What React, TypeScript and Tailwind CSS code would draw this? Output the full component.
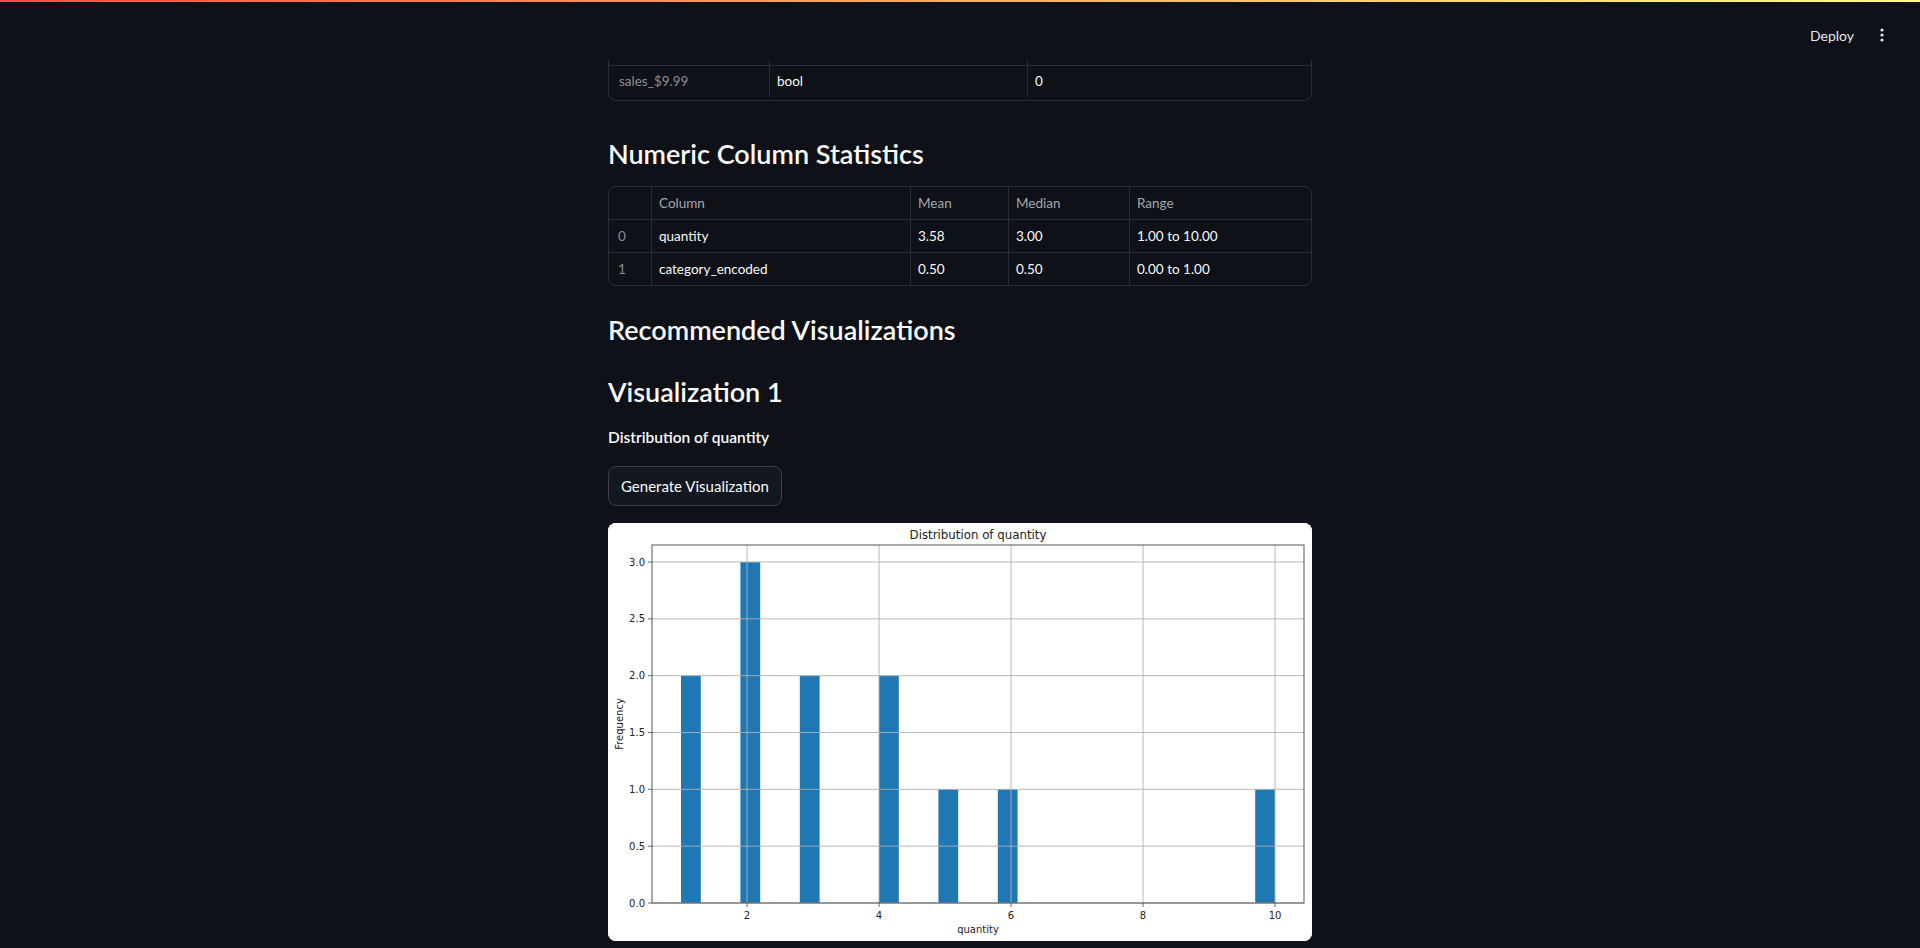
import React from "react";

const bins = [
  { from: 1.0, count: 2 },
  { from: 1.9, count: 3 },
  { from: 2.8, count: 2 },
  { from: 4.0, count: 2 },
  { from: 4.9, count: 1 },
  { from: 5.8, count: 1 },
  { from: 9.7, count: 1 },
];

const sx = (v: number) => 139 + (v - 2) * 66;
const sy = (v: number) => 380 - v * 113.67;

const HistChart = () => {
  const xTicks = [2, 4, 6, 8, 10];
  const yTicks = [0, 0.5, 1, 1.5, 2, 2.5, 3];
  return (
    <svg width="704" height="418" viewBox="0 0 704 418" className="block">
      <rect x="0" y="0" width="704" height="418" fill="#ffffff" />
      {bins.map((b, i) => (
        <rect
          key={i}
          x={sx(b.from)}
          y={sy(b.count)}
          width={0.3 * 66}
          height={380 - sy(b.count)}
          fill="#1f77b4"
        />
      ))}
      {xTicks.map((t) => (
        <line key={"gx" + t} x1={sx(t)} x2={sx(t)} y1="22" y2="380" stroke="#b0b0b0" strokeWidth="0.9" />
      ))}
      {yTicks.map((t) => (
        <line key={"gy" + t} x1="44" x2="696" y1={sy(t)} y2={sy(t)} stroke="#b0b0b0" strokeWidth="0.9" />
      ))}
      <rect x="44" y="22" width="652" height="358" fill="none" stroke="#555" strokeWidth="1" />
      {xTicks.map((t) => (
        <g key={"tx" + t}>
          <line x1={sx(t)} x2={sx(t)} y1="380" y2="384" stroke="#444" strokeWidth="0.8" />
          <text x={sx(t)} y="396" textAnchor="middle" fontSize="10" fill="#222" fontFamily="DejaVu Sans, sans-serif">
            {t}
          </text>
        </g>
      ))}
      {yTicks.map((t) => (
        <g key={"ty" + t}>
          <line x1="40" x2="44" y1={sy(t)} y2={sy(t)} stroke="#444" strokeWidth="0.8" />
          <text x="37" y={sy(t) + 3.6} textAnchor="end" fontSize="10" fill="#222" fontFamily="DejaVu Sans, sans-serif">
            {t.toFixed(1)}
          </text>
        </g>
      ))}
      <text x="370" y="16" textAnchor="middle" fontSize="11.8" fill="#222" fontFamily="DejaVu Sans, sans-serif">
        Distribution of quantity
      </text>
      <text x="370" y="410" textAnchor="middle" fontSize="10" fill="#222" fontFamily="DejaVu Sans, sans-serif">
        quantity
      </text>
      <text
        x="15"
        y="201"
        textAnchor="middle"
        fontSize="10"
        fill="#222"
        fontFamily="DejaVu Sans, sans-serif"
        transform="rotate(-90 15 201)"
      >
        Frequency
      </text>
    </svg>
  );
};

const statsRows = [
  { idx: "0", col: "quantity", mean: "3.58", median: "3.00", range: "1.00 to 10.00" },
  { idx: "1", col: "category_encoded", mean: "0.50", median: "0.50", range: "0.00 to 1.00" },
];

const StatsTable = () => (
  <div className="mt-[15px] border border-[#2a2d35] rounded-lg overflow-hidden text-[13.5px]">
    <div className="grid grid-cols-[42px_259px_98px_121px_1fr] h-[32px] text-[#a3a6ae]">
      <div />
      <div className="border-l border-[#2a2d35] px-[7px] flex items-center">Column</div>
      <div className="border-l border-[#2a2d35] px-[7px] flex items-center">Mean</div>
      <div className="border-l border-[#2a2d35] px-[7px] flex items-center">Median</div>
      <div className="border-l border-[#2a2d35] px-[7px] flex items-center">Range</div>
    </div>
    {statsRows.map((r) => (
      <div
        key={r.idx}
        className="grid grid-cols-[42px_259px_98px_121px_1fr] h-[33px] border-t border-[#2a2d35]"
      >
        <div className="px-[9px] flex items-center text-[#8b8e96]">{r.idx}</div>
        <div className="border-l border-[#2a2d35] px-[7px] flex items-center">{r.col}</div>
        <div className="border-l border-[#2a2d35] px-[7px] flex items-center">{r.mean}</div>
        <div className="border-l border-[#2a2d35] px-[7px] flex items-center">{r.median}</div>
        <div className="border-l border-[#2a2d35] px-[7px] flex items-center">{r.range}</div>
      </div>
    ))}
  </div>
);

const App = () => {
  return (
    <div className="min-h-screen bg-[#0e1117] text-[#fafafa] font-[Lato,sans-serif]">
      <div className="h-[2px] bg-gradient-to-r from-[#ff4b4b] to-[#fffd80]" />
      <header className="h-[58px] pt-2 flex items-center justify-end pr-[30px] gap-5">
        <button className="text-[14px] text-[#e6e6e6]">Deploy</button>
        <svg width="16" height="16" viewBox="0 0 16 16" fill="#e6e6e6">
          <circle cx="8" cy="3" r="1.6" />
          <circle cx="8" cy="8" r="1.6" />
          <circle cx="8" cy="13" r="1.6" />
        </svg>
      </header>

      <main className="w-[704px] mx-auto pb-2">
        <div className="border-x border-b border-[#2a2d35] rounded-b-lg text-[13.5px]">
          <div className="grid grid-cols-[160px_258px_1fr] h-[5px]">
            <div />
            <div className="border-l border-[#2a2d35]" />
            <div className="border-l border-[#2a2d35]" />
          </div>
          <div className="grid grid-cols-[160px_258px_1fr] h-[35px] border-t border-[#2a2d35] pb-[3px]">
            <div className="px-[10px] flex items-center text-[#8b8e96]">sales_$9.99</div>
            <div className="border-l border-[#2a2d35] px-[7px] flex items-center">bool</div>
            <div className="border-l border-[#2a2d35] px-[7px] flex items-center">0</div>
          </div>
        </div>

        <h3 className="mt-[36px] text-[27px] leading-[34px] font-semibold">Numeric Column Statistics</h3>
        <StatsTable />

        <h3 className="mt-[27px] text-[27px] leading-[34px] font-semibold">Recommended Visualizations</h3>
        <h3 className="mt-[28px] text-[27px] leading-[34px] font-semibold">Visualization 1</h3>
        <p className="mt-[16px] text-[15.5px] leading-6 font-semibold">Distribution of quantity</p>

        <button className="mt-[17px] h-[40px] px-[12px] rounded-lg border border-[#3b3e46] bg-[#131720] text-[15px] text-[#fafafa]">
          Generate Visualization
        </button>

        <div className="mt-[17px] rounded-lg overflow-hidden bg-white">
          <HistChart />
        </div>
      </main>
    </div>
  );
};

export default App;
